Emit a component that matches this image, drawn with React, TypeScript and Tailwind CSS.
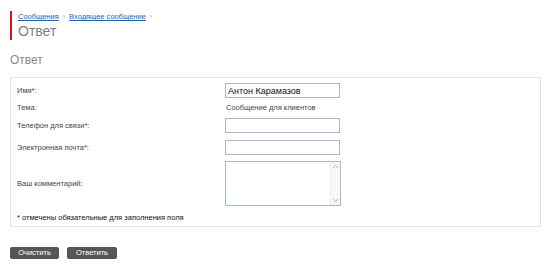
import React from "react";

const font = { fontFamily: '"Liberation Sans", Arial, sans-serif' };

const Field = ({ label, children, className }: { label: string; children: React.ReactNode; className: string }) => (
  <div className={`flex items-center ${className}`}>
    <div className="w-[208px] shrink-0 text-[7.5px] text-[#444]">{label}</div>
    {children}
  </div>
);

const Input = ({ value = "" }: { value?: string }) => (
  <input
    readOnly
    value={value}
    className="w-[115px] h-[15px] border border-[#a9b8cc] bg-white px-[2px] text-[9px] text-[#111] outline-none"
  />
);

const Chevron = ({ up }: { up?: boolean }) => (
  <svg width="7" height="5" viewBox="0 0 7 5" className="text-[#b8b8b8]">
    <path d={up ? "M1 4 L3.5 1.5 L6 4" : "M1 1 L3.5 3.5 L6 1"} fill="none" stroke="currentColor" strokeWidth="1" />
  </svg>
);

export default function App() {
  return (
    <div className="bg-white w-[550px] h-[276px] pl-[10px] pt-[11px]" style={font}>
      <div className="border-l-2 border-[#d8141a] pl-[6px] h-[29px] flex flex-col">
        <div className="flex items-center gap-[4px] text-[7.5px] leading-[11px] h-[11px]">
          <a href="#" className="text-[#1f5fb0] underline">Сообщения</a>
          <span className="text-[#aaa] text-[7px]">›</span>
          <a href="#" className="text-[#1f5fb0] underline">Входящее сообщение</a>
          <span className="text-[#aaa] text-[7px]">›</span>
        </div>
        <div className="text-[14px] leading-[18px] text-[#808080]">Ответ</div>
      </div>

      <div className="mt-[13px] text-[12px] leading-[14px] text-[#8a8a8a]">Ответ</div>

      <div className="mt-[10px] w-[531px] h-[150px] border border-[#e4e4e4] pl-[6px] pt-[5px]">
        <Field label="Имя*:" className="h-[15px]">
          <Input value="Антон Карамазов" />
        </Field>
        <Field label="Тема:" className="h-[20px]">
          <span className="text-[7.5px] text-[#444] pl-[1px]">Сообщение для клиентов</span>
        </Field>
        <Field label="Телефон для связи*:" className="h-[15px]">
          <Input />
        </Field>
        <Field label="Электронная почта*:" className="h-[15px] mt-[7px]">
          <Input />
        </Field>
        <Field label="Ваш комментарий:" className="h-[45px] mt-[6px]">
          <div className="w-[116px] h-[45px] border border-[#a9b8cc] bg-white flex">
            <textarea readOnly className="flex-1 resize-none outline-none text-[9px]" />
            <div className="w-[10px] bg-[#f7f7f4] border-l border-[#eeeeea] flex flex-col items-center justify-between py-[2px]">
              <Chevron up />
              <Chevron />
            </div>
          </div>
        </Field>
        <div className="mt-[6px] text-[7.5px] leading-[11px] text-[#111]">* отмечены обязательные для заполнения поля</div>
      </div>

      <div className="mt-[20px] flex gap-[8px]">
        <button className="w-[49px] h-[12px] rounded-[2px] bg-[#565656] text-white text-[7.5px] leading-[12px]">Очистить</button>
        <button className="w-[50px] h-[12px] rounded-[2px] bg-[#565656] text-white text-[7.5px] leading-[12px]">Ответить</button>
      </div>
    </div>
  );
}
